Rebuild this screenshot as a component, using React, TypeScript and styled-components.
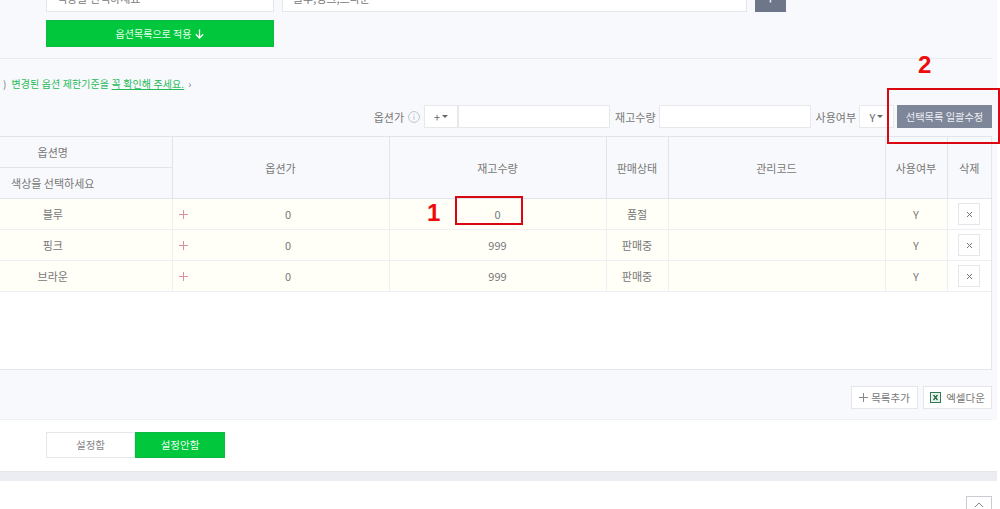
import styled, { createGlobalStyle } from "styled-components";

const GlobalStyle = createGlobalStyle`
    html, body {
        margin: 0;
        padding: 0;
        background: #fff;
        overflow: hidden;
    }
    body {
        font-family: "Noto Sans CJK KR", "Noto Sans", sans-serif;
        font-size: 11px;
        color: #777;
    }
`

/* the shot is scrolled: the page starts left of and above the window */
const Sheet = styled.div`
    position: relative;
    width: 1066px;
    height: 524px;
    margin: -15px 0 0 -66px;
    overflow: hidden;
`

const Panel = styled.div`
    width: 1058px;
    background: #f7f9fc;
    padding-right: 5px;
`

const TopForm = styled.div`
    display: grid;
    grid-template-columns: 228px 465px 31px;
    column-gap: 8px;
    row-gap: 8px;
    padding: 0 0 11px 112px;
    border-bottom: 1px solid #e9ebf0;
`

const TextBox = styled.div`
    box-sizing: border-box;
    height: 27px;
    padding-left: 10px;
    background: #fff;
    border: 1px solid #e4e6ea;
    line-height: 25px;
    color: #777;
`

const AddButton = styled.div`
    height: 27px;
    background: #6e768a;
    color: #fff;
    text-align: center;
    line-height: 25px;
    font-size: 16px;
`

const ApplyButton = styled.div`
    grid-column: 1;
    display: flex;
    align-items: center;
    justify-content: center;
    gap: 4px;
    height: 27px;
    background: #00c73c;
    color: #e8fbee;
    font-size: 10px;
    box-shadow: inset 0 0 0 1px #0dba42;
`

const Notice = styled.div`
    display: flex;
    align-items: center;
    height: 20px;
    margin-top: 14px;
    padding-left: 69px;
    font-size: 10px;
    letter-spacing: 0.1px;
    white-space: pre;
    color: #28b95a;

    .paren {
        color: #777;
        margin-right: 5px;
    }
    .more {
        color: #777;
        margin-left: 4px;
    }
`

const Toolbar = styled.div`
    display: flex;
    justify-content: flex-end;
    align-items: center;
    height: 23px;
    margin-top: 12px;
    margin-bottom: 8px;
`

const ToolLabel = styled.span<{ $gap?: number }>`
    margin-left: ${(p) => p.$gap ?? 4}px;
    margin-right: 3px;
    white-space: nowrap;
`

const InfoWrap = styled.span`
    display: flex;
    margin: 0 4px 0 1px;
`

const ToolSelect = styled.div<{ $width: number }>`
    box-sizing: border-box;
    display: flex;
    align-items: center;
    justify-content: center;
    gap: 2px;
    width: ${(p) => p.$width}px;
    height: 23px;
    background: #fff;
    border: 1px solid #e6e8ec;
    color: #666;
`

const Caret = styled.i`
    width: 0;
    height: 0;
    border-left: 3px solid transparent;
    border-right: 3px solid transparent;
    border-top: 3px solid #666;
`

const ToolInput = styled.div<{ $width: number }>`
    box-sizing: border-box;
    width: ${(p) => p.$width}px;
    height: 23px;
    background: #fff;
    border: 1px solid #e6e8ec;
`

const BulkButton = styled.div`
    width: 95px;
    height: 23px;
    margin-left: 3px;
    background: #7e8699;
    color: #eef0f4;
    font-size: 10.2px;
    line-height: 23px;
    text-align: center;
`

const TableWrap = styled.div`
    box-sizing: border-box;
    height: 234px;
    background: #fff;
    border-right: 1px solid #e4e6ea;
    border-bottom: 1px solid #e4e6ea;
`

const Table = styled.table`
    width: 100%;
    table-layout: fixed;
    border-collapse: collapse;

    th, td {
        padding: 0;
        text-align: center;
        font-weight: 400;
    }
    th {
        background: #f7f9fc;
        border-top: 1px solid #e1e4ea;
        border-bottom: 1px solid #e1e4ea;
        border-left: 1px solid #e1e4ea;
        height: 30px;
    }
    th:first-child, td:first-child {
        border-left: 0;
    }
    td {
        height: 30px;
        background: #fffff7;
        border-left: 1px solid #eeeff2;
        border-bottom: 1px solid #eeeff2;
    }
    td.delete {
        background: #fff;
    }
`

const Col = styled.col<{ $width?: number }>`
    width: ${(p) => (p.$width ? `${p.$width}px` : "auto")};
`

const PriceCell = styled.div`
    display: flex;
    align-items: center;
    padding-left: 6px;

    span {
        flex: 1;
    }
`

const DeleteButton = styled.div`
    box-sizing: border-box;
    display: flex;
    align-items: center;
    justify-content: center;
    width: 22px;
    height: 22px;
    margin: 0 auto;
    background: #fff;
    border: 1px solid #e4e6ea;
`

const TableFooter = styled.div`
    display: flex;
    justify-content: flex-end;
    gap: 5px;
    height: 33px;
    padding-top: 16px;
    border-bottom: 1px solid #eef0f4;
`

const FootButton = styled.div<{ $width: number; $gap: number }>`
    box-sizing: border-box;
    display: flex;
    align-items: center;
    justify-content: center;
    gap: ${(p) => p.$gap}px;
    width: ${(p) => p.$width}px;
    height: 23px;
    background: #fff;
    border: 1px solid #e4e6ea;
    font-size: 10.5px;
    white-space: nowrap;
`

const Toggle = styled.div`
    display: flex;
    padding: 12px 0 13px 112px;
`

const ToggleItem = styled.div<{ $on?: boolean }>`
    box-sizing: border-box;
    width: ${(p) => (p.$on ? 90 : 89)}px;
    height: 26px;
    line-height: 24px;
    text-align: center;
    font-size: 10.5px;
    border: 1px solid ${(p) => (p.$on ? "#0dba42" : "#e4e6ea")};
    background: ${(p) => (p.$on ? "#00c73c" : "#fff")};
    color: ${(p) => (p.$on ? "#e8fbee" : "#888")};
`

const Band = styled.div`
    width: 1063px;
    height: 9px;
    background: #ebedf2;
    border-top: 1px solid #e4e6ea;
`

const TopLinkRow = styled.div`
    display: flex;
    justify-content: flex-end;
    padding: 15px 8px 0 0;
`

const TopLink = styled.div`
    box-sizing: border-box;
    display: flex;
    justify-content: center;
    padding-top: 5px;
    width: 26px;
    height: 26px;
    background: #fff;
    border: 1px solid #c9ccd2;
`

const RedBox = styled.div<{ $l: number; $t: number; $w: number; $h: number }>`
    position: absolute;
    box-sizing: border-box;
    left: ${(p) => p.$l + 66}px;
    top: ${(p) => p.$t + 15}px;
    width: ${(p) => p.$w}px;
    height: ${(p) => p.$h}px;
    border: 2px solid #d9070f;
`

const Mark = styled.div<{ $l: number; $t: number }>`
    position: absolute;
    left: ${(p) => p.$l + 66}px;
    top: ${(p) => p.$t + 15}px;
    font-family: "Liberation Sans", Arial, sans-serif;
    font-size: 24px;
    font-weight: 700;
    line-height: 24px;
    color: #ee0b0b;
`

const InfoIcon = () => (
    <svg width="12" height="12" viewBox="0 0 12 12" fill="none" stroke="#b9bdc6" strokeWidth="0.9">
        <circle cx="6" cy="6" r="5.4" />
        <path d="M6 5v4M6 3v1" />
    </svg>
)

const PlusIcon = ({ color, size }: { color: string; size: number }) => (
    <svg width={size} height={size} viewBox="0 0 9 9" stroke={color} strokeWidth="1" fill="none">
        <path d="M4.5 0v9M0 4.5h9" />
    </svg>
)

const CrossIcon = () => (
    <svg width="7" height="7" viewBox="0 0 7 7" stroke="#777" strokeWidth="1" fill="none">
        <path d="M1 1l5 5M6 1l-5 5" />
    </svg>
)

const ArrowDown = () => (
    <svg width="9" height="10" viewBox="0 0 9 10" stroke="#fff" strokeWidth="1.3" fill="none">
        <path d="M4.5 0.5v8.5M0.8 5.3l3.7 3.7 3.7-3.7" />
    </svg>
)

const ExcelIcon = () => (
    <svg width="11" height="11" viewBox="0 0 11 11" fill="none">
        <rect x="0.5" y="0.5" width="10" height="10" fill="#e9f3ec" stroke="#2f7a52" />
        <path d="M3.5 3l4 5M7.5 3l-4 5" stroke="#1f6b44" strokeWidth="1.3" />
    </svg>
)

const ChevronUp = () => (
    <svg width="10" height="6" viewBox="0 0 10 6" fill="none" stroke="#888" strokeWidth="1">
        <path d="M1 5l4-4 4 4" />
    </svg>
)

const rows = [
    { name: "블루", stock: "0", status: "품절" },
    { name: "핑크", stock: "999", status: "판매중" },
    { name: "브라운", stock: "999", status: "판매중" },
];

export default function App() {
    return (
        <>
            <GlobalStyle />
            <Sheet>
                <Panel>
                    <TopForm>
                        <TextBox>색상을 선택하세요</TextBox>
                        <TextBox>블루,핑크,브라운</TextBox>
                        <AddButton>+</AddButton>
                        <ApplyButton>옵션목록으로 적용 <ArrowDown /></ApplyButton>
                    </TopForm>
                    <Notice>
                        <span className="paren">)</span>
                        변경된 옵션 제한기준을 <u>꼭 확인해 주세요.</u>
                        <span className="more">›</span>
                    </Notice>
                    <Toolbar>
                        <ToolLabel>옵션가</ToolLabel>
                        <InfoWrap><InfoIcon /></InfoWrap>
                        <ToolSelect $width={34}>+ <Caret /></ToolSelect>
                        <ToolInput $width={152} />
                        <ToolLabel $gap={5}>재고수량</ToolLabel>
                        <ToolInput $width={152} />
                        <ToolLabel $gap={5}>사용여부</ToolLabel>
                        <ToolSelect $width={35}>Y <Caret /></ToolSelect>
                        <BulkButton>선택목록 일괄수정</BulkButton>
                    </Toolbar>
                    <TableWrap>
                        <Table>
                            <colgroup>
                                <Col $width={238} />
                                <Col $width={217} />
                                <Col $width={217} />
                                <Col $width={62} />
                                <Col $width={217} />
                                <Col $width={62} />
                                <Col />
                            </colgroup>
                            <thead>
                                <tr>
                                    <th>옵션명</th>
                                    <th rowSpan={2}>옵션가</th>
                                    <th rowSpan={2}>재고수량</th>
                                    <th rowSpan={2}>판매상태</th>
                                    <th rowSpan={2}>관리코드</th>
                                    <th rowSpan={2}>사용여부</th>
                                    <th rowSpan={2}>삭제</th>
                                </tr>
                                <tr>
                                    <th>색상을 선택하세요</th>
                                </tr>
                            </thead>
                            <tbody>
                                {rows.map((row) => (
                                    <tr key={row.name}>
                                        <td>{row.name}</td>
                                        <td>
                                            <PriceCell>
                                                <PlusIcon color="#dd8f9c" size={9} />
                                                <span>0</span>
                                            </PriceCell>
                                        </td>
                                        <td>{row.stock}</td>
                                        <td>{row.status}</td>
                                        <td></td>
                                        <td>Y</td>
                                        <td className="delete">
                                            <DeleteButton><CrossIcon /></DeleteButton>
                                        </td>
                                    </tr>
                                ))}
                            </tbody>
                        </Table>
                    </TableWrap>
                    <TableFooter>
                        <FootButton $width={67} $gap={3}>
                            <PlusIcon color="#888" size={9} /> 목록추가
                        </FootButton>
                        <FootButton $width={69} $gap={5}>
                            <ExcelIcon /> 엑셀다운
                        </FootButton>
                    </TableFooter>
                </Panel>
                <Toggle>
                    <ToggleItem>설정함</ToggleItem>
                    <ToggleItem $on>설정안함</ToggleItem>
                </Toggle>
                <Band />
                <TopLinkRow>
                    <TopLink><ChevronUp /></TopLink>
                </TopLinkRow>
                <RedBox $l={455} $t={196} $w={68} $h={29} />
                <RedBox $l={887} $t={88} $w={113} $h={56} />
                <Mark $l={427} $t={201}>1</Mark>
                <Mark $l={918} $t={53}>2</Mark>
            </Sheet>
        </>
    );
}
